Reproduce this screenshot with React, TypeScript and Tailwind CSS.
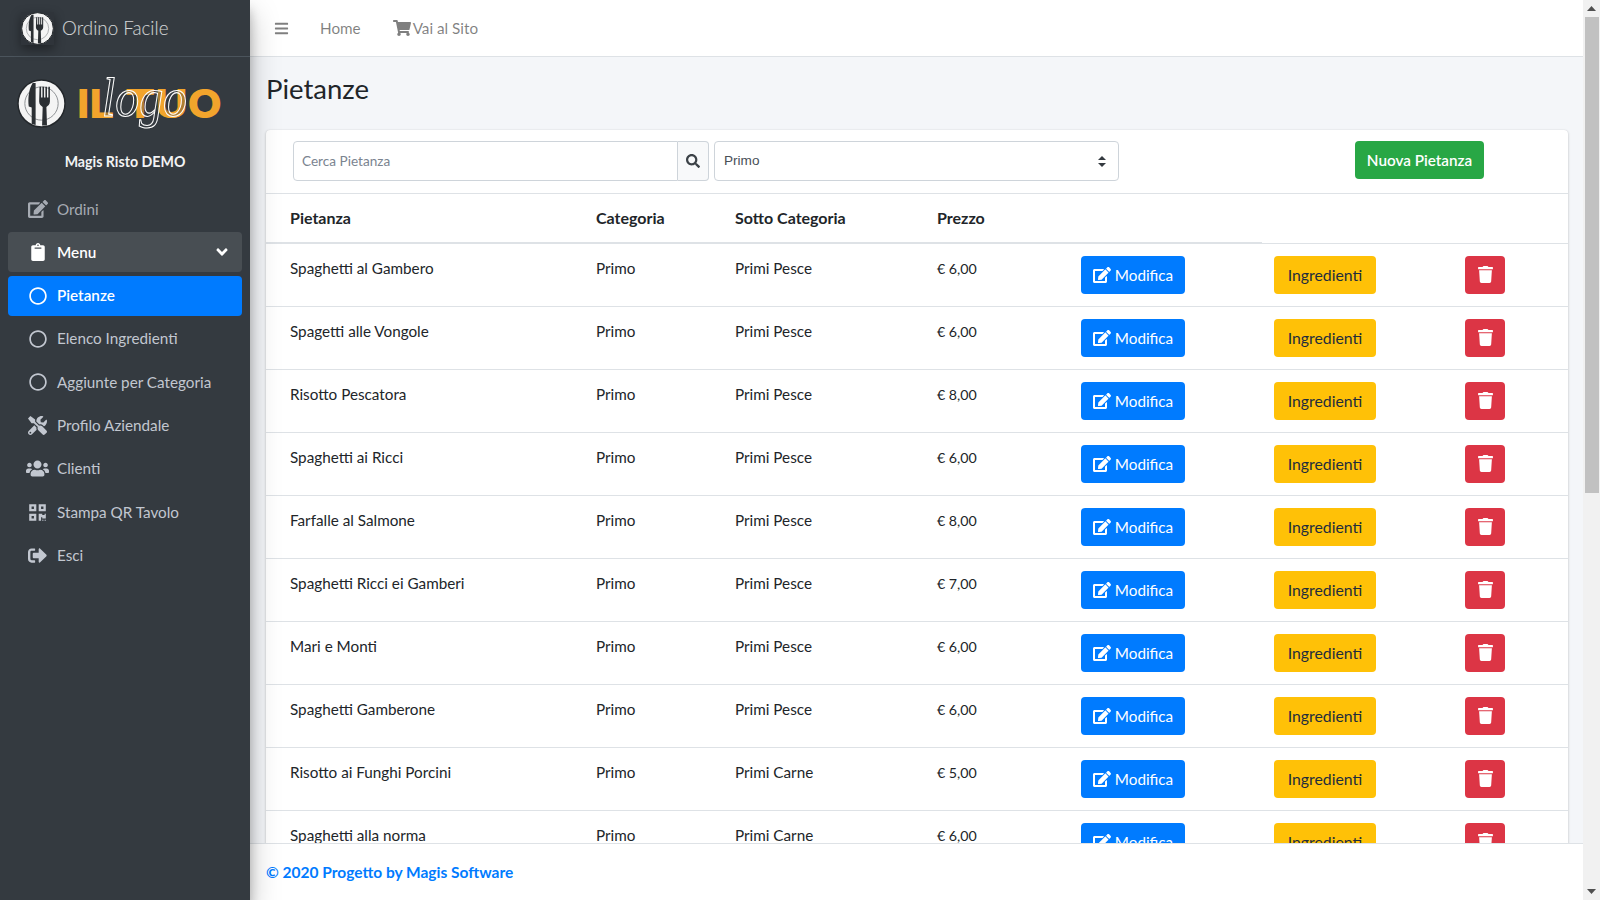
import {
  FaEdit,
  FaClipboard,
  FaRegCircle,
  FaTools,
  FaUsers,
  FaQrcode,
  FaSignOutAlt,
  FaAngleDown,
  FaBars,
  FaShoppingCart,
  FaSearch,
  FaTrash,
} from "react-icons/fa";
import type { IconType } from "react-icons";

const rows = [
  ["Spaghetti al Gambero", "Primi Pesce", "€ 6,00"],
  ["Spagetti alle Vongole", "Primi Pesce", "€ 6,00"],
  ["Risotto Pescatora", "Primi Pesce", "€ 8,00"],
  ["Spaghetti ai Ricci", "Primi Pesce", "€ 6,00"],
  ["Farfalle al Salmone", "Primi Pesce", "€ 8,00"],
  ["Spaghetti Ricci ei Gamberi", "Primi Pesce", "€ 7,00"],
  ["Mari e Monti", "Primi Pesce", "€ 6,00"],
  ["Spaghetti Gamberone", "Primi Pesce", "€ 6,00"],
  ["Risotto ai Funghi Porcini", "Primi Carne", "€ 5,00"],
  ["Spaghetti alla norma", "Primi Carne", "€ 6,00"],
];

function PlateIcon({ className }: { className?: string }) {
  return (
    <svg className={className} viewBox="0 0 50 50">
      <circle cx="25" cy="25" r="24" fill="#f4f4f4" stroke="#23272b" strokeWidth="1.5" />
      <circle cx="25" cy="25" r="17" fill="#f4f4f4" stroke="#8c8f92" strokeWidth="1" />
      <path d="M16 4 C12 10 11 20 12 28 L15 29 L15 46 L19 47 L19 4 Z" fill="#2b2f33" />
      <path
        d="M23 8 h1.6 v11 h1.4 v-11 h1.6 v11 h1.4 v-11 h1.6 v11 h1.4 v-11 h1.6 v15 c0 3 -2 4.5 -3.6 5.5 l0.6 19 h-5 l0.6 -19 c-1.6 -1 -3.6 -2.5 -3.6 -5.5 z"
        fill="#2b2f33"
      />
    </svg>
  );
}

function Logo() {
  return (
    <div className="flex h-[58px] items-center pl-[17px]">
      <PlateIcon className="h-[49px] w-[49px] shrink-0" />
      <svg className="ml-[11px] h-[58px] w-[148px]" viewBox="0 0 148 58">
        <text
          x="0"
          y="44"
          fontFamily="Inter, sans-serif"
          fontWeight="800"
          fontSize="40"
          fill="#f2a42c"
          textLength="37"
          lengthAdjust="spacingAndGlyphs"
        >
          IL
        </text>
        <text
          x="48"
          y="44"
          fontFamily="Inter, sans-serif"
          fontWeight="800"
          fontSize="40"
          fill="#f2a42c"
          textLength="97"
          lengthAdjust="spacingAndGlyphs"
        >
          TUO
        </text>
        <text
          x="25"
          y="42"
          fontFamily="'Liberation Serif', serif"
          fontStyle="italic"
          fontSize="54"
          fill="#343a40"
          fillOpacity="0.35"
          stroke="#ffffff"
          strokeWidth="1.1"
          textLength="85"
          lengthAdjust="spacingAndGlyphs"
        >
          logo
        </text>
      </svg>
    </div>
  );
}

function NavItem({
  icon: Icon,
  label,
  tone = "default",
  size = "text-[18px]",
  caret,
}: {
  icon: IconType;
  label: string;
  tone?: "default" | "dim" | "open" | "active";
  size?: string;
  caret?: boolean;
}) {
  const toneClass = {
    default: "text-[#c2c7d0]",
    dim: "text-[#a6abb3]",
    open: "bg-white/10 text-white font-semibold",
    active: "bg-[#007bff] text-white font-semibold",
  }[tone];
  return (
    <li className={`mb-[3.3px] flex h-[40px] items-center rounded-[4px] pl-[18px] pr-[11px] ${toneClass}`}>
      <span className="flex w-[23px] justify-center">
        <Icon className={size} />
      </span>
      <span className="ml-[8px] flex-1">{label}</span>
      {caret && <FaAngleDown className="text-[18px]" />}
    </li>
  );
}

function Sidebar() {
  return (
    <aside className="relative z-10 flex w-[250px] shrink-0 flex-col bg-[#343a40] shadow-[0_14px_28px_rgba(0,0,0,0.25),0_10px_10px_rgba(0,0,0,0.22)]">
      <div className="flex h-[57px] items-center border-b border-[#4b545c] pl-[21px]">
        <span className="bg-[#2f343a] shadow-[0_4px_10px_rgba(0,0,0,0.4)]">
          <PlateIcon className="h-[33px] w-[33px]" />
        </span>
        <span className="ml-[8px] text-[18.8px] font-light text-white/80">Ordino Facile</span>
      </div>
      <div className="mt-[17px]">
        <Logo />
      </div>
      <div className="mt-[18px] text-center text-[14.2px] font-bold leading-[24px] text-[#f2f3f4]">Magis Risto DEMO</div>
      <ul className="mt-[15px] px-[8px]">
        <NavItem icon={FaEdit} label="Ordini" tone="dim" size="text-[20px]" />
        <NavItem icon={FaClipboard} label="Menu" tone="open" caret />
        <NavItem icon={FaRegCircle} label="Pietanze" tone="active" />
        <NavItem icon={FaRegCircle} label="Elenco Ingredienti" />
        <NavItem icon={FaRegCircle} label="Aggiunte per Categoria" />
        <NavItem icon={FaTools} label="Profilo Aziendale" size="text-[19px]" />
        <NavItem icon={FaUsers} label="Clienti" size="text-[23px]" />
        <NavItem icon={FaQrcode} label="Stampa QR Tavolo" size="text-[19px]" />
        <NavItem icon={FaSignOutAlt} label="Esci" size="text-[19px]" />
      </ul>
    </aside>
  );
}

function Toolbar() {
  return (
    <div className="flex h-[64px] items-start border-b border-[#dee2e6] pl-[27px] pt-[11px]">
      <div className="flex h-[40px] w-[416px]">
        <div className="flex flex-1 items-center rounded-l-[4px] border border-[#ced4da] pl-[8px] text-[13.6px] text-[#7b8490]">
          Cerca Pietanza
        </div>
        <div className="flex w-[31px] items-center justify-center rounded-r-[4px] border border-l-0 border-[#ced4da] bg-[#f8f9fa] text-[#3c4247]">
          <FaSearch className="text-[14px]" />
        </div>
      </div>
      <div className="ml-[5px] flex h-[40px] w-[405px] items-center justify-between rounded-[4px] border border-[#ced4da] pl-[9px] pr-[12px] font-['Liberation_Sans',sans-serif] text-[13.6px] text-[#495057]">
        Primo
        <svg className="h-[11px] w-[8px]" viewBox="0 0 8 11" fill="#343a40">
          <path d="M4 0 L8 4 H0 Z M0 7 H8 L4 11 Z" />
        </svg>
      </div>
      <button className="ml-[236px] h-[38px] w-[129px] rounded-[4px] bg-[#28a745] font-semibold text-white">
        Nuova Pietanza
      </button>
    </div>
  );
}

function Table() {
  return (
    <table className="w-full table-fixed border-collapse text-left text-[#212529]">
      <colgroup>
        <col className="w-[318px]" />
        <col className="w-[139px]" />
        <col className="w-[202px]" />
        <col className="w-[144px]" />
        <col className="w-[193px]" />
        <col className="w-[191px]" />
        <col />
      </colgroup>
      <thead>
        <tr className="h-[49px] text-[16px]">
          <th className="border-b-2 border-[#dee2e6] pl-[24px] font-bold">Pietanza</th>
          <th className="border-b-2 border-[#dee2e6] pl-[12px] font-bold">Categoria</th>
          <th className="border-b-2 border-[#dee2e6] pl-[12px] font-bold">Sotto Categoria</th>
          <th className="border-b-2 border-[#dee2e6] pl-[12px] font-bold">Prezzo</th>
          <th className="border-b-2 border-[#dee2e6]"></th>
          <th className="border-b border-[#dee2e6]"></th>
          <th className="border-b border-[#dee2e6]"></th>
        </tr>
      </thead>
      <tbody>
        {rows.map(([name, sub, price]) => (
          <tr key={name} className="border-b border-[#dee2e6]">
            <td className="h-[63px] pb-[12px] pl-[24px] align-middle">{name}</td>
            <td className="pb-[12px] pl-[12px] align-middle">Primo</td>
            <td className="pb-[12px] pl-[12px] align-middle">{sub}</td>
            <td className="pb-[12px] pl-[12px] align-middle text-[14.2px]">{price}</td>
            <td className="pl-[12px] align-middle">
              <button className="flex h-[38px] w-[104px] items-center justify-center gap-[4px] rounded-[4px] bg-[#007bff] pt-[1px] text-white">
                <FaEdit className="text-[18px]" />
                Modifica
              </button>
            </td>
            <td className="pl-[12px] align-middle">
              <button className="h-[38px] w-[102px] rounded-[4px] bg-[#ffc107] text-[15.8px] text-[#1f2d3d]">
                Ingredienti
              </button>
            </td>
            <td className="pl-[12px] align-middle">
              <button className="flex h-[38px] w-[40px] items-center justify-center rounded-[4px] bg-[#dc3545] text-white">
                <FaTrash className="text-[17px]" />
              </button>
            </td>
          </tr>
        ))}
      </tbody>
    </table>
  );
}

function Scrollbar() {
  return (
    <div className="flex w-[17px] shrink-0 flex-col items-center bg-[#f1f1f1]">
      <div className="flex h-[17px] items-center justify-center">
        <svg className="h-[5px] w-[9px]" viewBox="0 0 9 5" fill="#505050">
          <path d="M4.5 0 L9 5 H0 Z" />
        </svg>
      </div>
      <div className="h-[476px] w-[14px] bg-[#c1c1c1]" />
      <div className="mt-auto flex h-[17px] items-center justify-center">
        <svg className="h-[5px] w-[9px]" viewBox="0 0 9 5" fill="#505050">
          <path d="M0 0 H9 L4.5 5 Z" />
        </svg>
      </div>
    </div>
  );
}

export default function App() {
  return (
    <div className="flex h-screen w-screen overflow-hidden font-['Lato',sans-serif] text-[15.25px]">
      <Sidebar />
      <div className="flex min-w-0 flex-1 flex-col bg-[#f4f6f9]">
        <nav className="flex h-[57px] shrink-0 items-center border-b border-[#dee2e6] bg-white pl-[24px] text-black/50">
          <FaBars className="text-[15px]" />
          <span className="ml-[31px]">Home</span>
          <FaShoppingCart className="ml-[32px] text-[18px]" />
          <span className="ml-[2px]">Vai al Sito</span>
        </nav>
        <main className="min-h-0 flex-1 overflow-hidden pl-[16px] pr-[15px]">
          <h1 className="mt-[14px] text-[27.5px] leading-[36px] text-[#212529]">Pietanze</h1>
          <div className="mt-[23px] rounded-[4px] bg-white shadow-[0_0_1px_rgba(0,0,0,0.125),0_1px_3px_rgba(0,0,0,0.2)]">
            <Toolbar />
            <Table />
          </div>
        </main>
        <footer className="flex h-[57px] shrink-0 items-center border-t border-[#dee2e6] bg-white pl-[16px] pt-[1px] text-[15.5px] font-bold text-[#007bff]">
          © 2020 Progetto by Magis Software
        </footer>
      </div>
      <Scrollbar />
    </div>
  );
}
